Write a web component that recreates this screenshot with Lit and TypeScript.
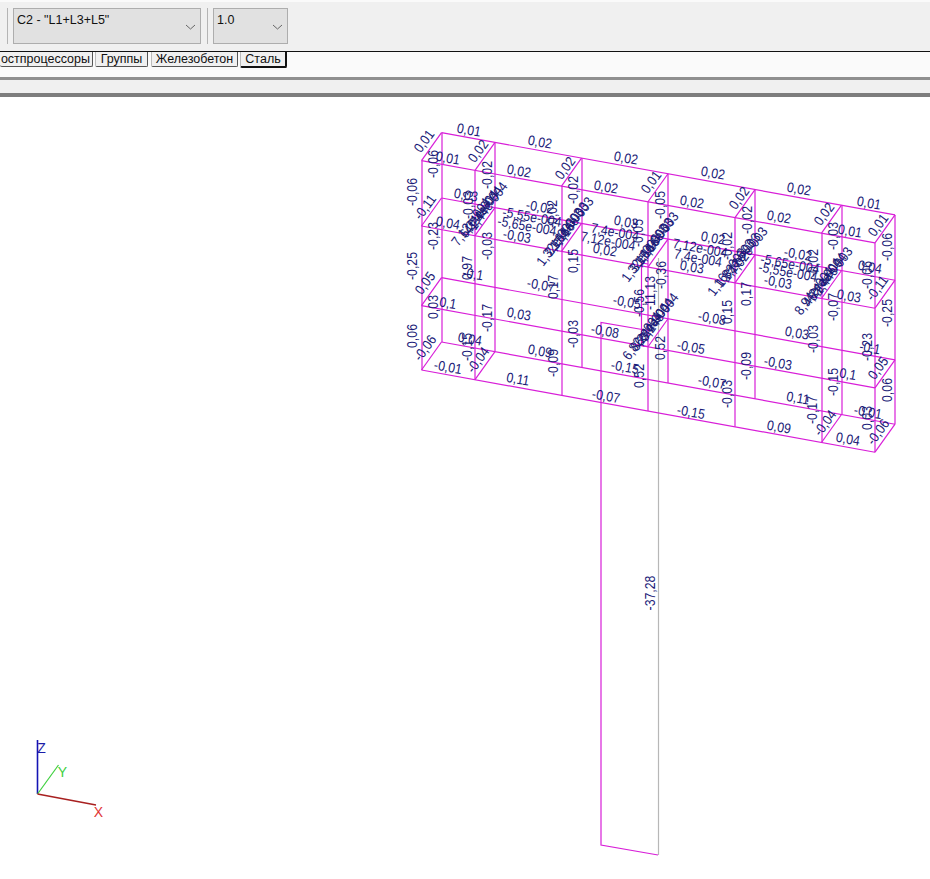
import { LitElement, html, svg, css } from 'lit';
import { customElement } from 'lit/decorators.js';

// x of each frame column on the front face, back face is offset by +20,-28
const COLS = [421.5, 475, 561.5, 648, 735, 821.5, 875];
const LEVELS = [160.7, 226, 305.7, 370];
const SLOPE = 0.1813;
const frontY = (x: number, level: number) => LEVELS[level] + (x - 421.5) * SLOPE;

type Label = [string, number, number];

const ALONG: Label[] = [
  ['0,01', 469, 130], ['0,02', 540, 142], ['0,02', 626, 158], ['0,02', 713, 173], ['0,02', 799, 189], ['0,01', 869, 203],
  ['0,01', 448, 158], ['0,02', 519, 171], ['0,02', 606, 187], ['0,02', 692, 202], ['0,02', 779, 217], ['0,01', 850, 231],
  ['0,03', 466, 195], ['-0,02', 540, 207], ['0,03', 626, 222], ['0,02', 713, 238], ['-0,02', 798, 254], ['0,04', 870, 267],
  ['0,04', 448, 223], ['-0,03', 517, 236], ['0,02', 605, 250], ['0,03', 692, 267], ['-0,03', 778, 282], ['0,03', 849, 296],
  ['-0,1', 473, 274], ['-0,07', 541, 285], ['-0,05', 627, 302], ['-0,08', 712, 318], ['0,03', 797, 333], ['-0,1', 870, 348],
  ['0,1', 448, 303], ['0,03', 519, 314], ['-0,08', 605, 331], ['-0,05', 691, 347], ['-0,03', 778, 363], ['0,1', 848, 374],
  ['0,04', 470, 339], ['0,09', 540, 351], ['-0,15', 625, 367], ['-0,07', 712, 382], ['0,11', 798, 398], ['-0,01', 868, 412],
  ['-0,01', 448, 367], ['0,11', 518, 379], ['-0,07', 606, 396], ['-0,15', 691, 412], ['0,09', 779, 427], ['0,04', 848, 439],
  ['-5,55e-004', 532, 217], ['-5,65e-004', 527, 226], ['7,4e-004', 615, 232], ['7,12e-004', 608, 241],
  ['7,12e-004', 700, 248], ['7,4e-004', 698, 258], ['-5,65e-004', 790, 264], ['-5,55e-004', 788, 272],
];

const DIAG: Label[] = [
  ['0,01', 424, 141], ['0,02', 478, 151], ['0,02', 565, 168], ['0,01', 651, 182], ['0,02', 739, 198], ['0,02', 824, 214], ['0,01', 878, 225],
  ['-0,11', 425, 207], ['-0,11', 877, 288], ['0,05', 425, 283], ['0,05', 878, 368],
  ['-0,06', 425, 348], ['-0,04', 478, 360], ['-0,04', 825, 423], ['-0,06', 878, 432],
  // these sit on top of each other in the original too
  ['7,12e-004', 471, 222], ['1,44e-004', 488, 206], ['6,24e-004', 479, 214], ['4,24e-004', 483, 210],
  ['1,32e-003', 556, 242], ['7,16e-003', 574, 221], ['2,16e-003', 564, 232], ['1,16e-003', 569, 226],
  ['1,32e-003', 641, 258], ['7,16e-003', 659, 236], ['3,16e-003', 649, 248], ['1,16e-003', 654, 242],
  ['1,16e-003', 727, 272], ['7,02e-003', 748, 251], ['1,32e-003', 735, 263], ['1,12e-003', 741, 257],
  ['8,94e-004', 814, 291], ['1,44e-003', 833, 271], ['4,24e-004', 822, 282], ['6,24e-004', 827, 277],
  ['6,82e-004', 642, 336], ['3,24e-004', 659, 317], ['8,24e-004', 650, 327], ['6,24e-004', 654, 322],
];

const UPRIGHT: Label[] = [
  ['-0,06', 433, 164], ['-0,02', 487, 175], ['-0,02', 573, 190], ['-0,05', 660, 205], ['-0,02', 747, 220], ['-0,03', 833, 236], ['-0,06', 887, 247],
  ['-0,06', 412, 192], ['-0,03', 468, 205], ['-0,02', 552, 214], ['-0,05', 638, 233], ['-0,02', 727, 246], ['-0,02', 813, 263], ['-0,06', 867, 275],
  ['-0,25', 412, 266], ['-0,23', 433, 236], ['-0,03', 487, 246], ['0,15', 573, 261], ['-0,36', 661, 275], ['0,17', 746, 294], ['-0,07', 833, 307], ['-0,25', 887, 313],
  ['0,97', 467, 268], ['0,17', 553, 287], ['-0,56', 639, 303], ['-11,13', 650, 293], ['0,15', 727, 312], ['-0,03', 813, 339], ['-0,23', 867, 347],
  ['0,06', 412, 336], ['0,03', 433, 307], ['-0,17', 487, 318], ['-0,03', 573, 334], ['0,52', 660, 348], ['-0,09', 746, 366], ['-0,15', 833, 382], ['0,06', 887, 390],
  ['-0,15', 467, 347], ['-0,09', 553, 363], ['0,52', 639, 376], ['-0,03', 727, 394], ['-0,17', 812, 410], ['0,03', 867, 418],
  ['-37,28', 650, 593],
];

@customElement('app-root')
export class AppRoot extends LitElement {
  static styles = css`
    :host {
      display: block;
      width: 930px;
      height: 879px;
      overflow: hidden;
      background: #fff;
      font-family: 'Liberation Sans', Arial, sans-serif;
    }
    .toolbar {
      height: 52px;
      box-sizing: border-box;
      background: #f0f0f0;
      border-top: 2px solid #fafafa;
      border-bottom: 1px solid #111;
      display: flex;
      gap: 5px;
      padding: 6px 0 0 7px;
      align-items: flex-start;
    }
    .sep {
      width: 1px;
      height: 36px;
      background: #b4b4b4;
    }
    .sep.mid { margin-left: 1px; }
    .combo {
      height: 36px;
      box-sizing: border-box;
      background: #e1e1e1;
      border: 1px solid #adadad;
      padding: 4px 3px;
      font-size: 12.5px;
      line-height: 15px;
      color: #111;
      position: relative;
    }
    .combo.wide { width: 188px; }
    .combo.small { width: 75px; }
    .combo svg {
      position: absolute;
      right: 4px;
      bottom: 13px;
    }
    .tabs {
      height: 25px;
      box-sizing: border-box;
      background: #fafafa;
      display: flex;
      gap: 2px;
      font-size: 12.5px;
      line-height: 15px;
      color: #111;
    }
    .tab {
      height: 15px;
      box-sizing: border-box;
      background: #f0f0f0;
      border-left: 1px solid #bbb;
      border-right: 1px solid #555;
      border-bottom: 1px solid #555;
      border-radius: 0 0 2px 2px;
      text-align: center;
      white-space: nowrap;
      flex: none;
    }
    .tab.first {
      width: 93px;
      border-left: none;
      text-align: right;
      padding-right: 2px;
    }
    .tab.groups { width: 53px; }
    .tab.concrete { width: 87px; margin-left: 1px; }
    .tab.steel {
      width: 47px;
      height: 16px;
      border-right: 2px solid #111;
      border-bottom: 2px solid #111;
    }
    .band {
      height: 20px;
      box-sizing: border-box;
      background: #f0f0f0;
      border-top: 3px solid #8f8f8f;
      border-bottom: 4px solid #7d7d7d;
    }
    svg.view { display: block; }
    svg.view text {
      font-size: 14px;
      fill: #1a1a78;
      text-anchor: middle;
      dominant-baseline: central;
    }
    svg.view text.axis { font-size: 14px; }
    svg.view text.axis.z { fill: #1c1ca8; }
    svg.view text.axis.y { fill: #3ed03e; }
    svg.view text.axis.x { fill: #e03535; }
    svg.view line, svg.view polyline { fill: none; stroke: #d81ed8; stroke-width: 1.2; }
    svg.view line.pillar { stroke: #b7b7b7; }
    svg.view line.axis-z { stroke: #1414b4; stroke-width: 1.6; }
    svg.view line.axis-y { stroke: #3ed03e; }
    svg.view line.axis-x { stroke: #a82020; stroke-width: 1.6; }
    .chev { fill: none; stroke: #666; stroke-width: 1; }
  `;

  private frame() {
    const lines: unknown[] = [];
    const seg = (x1: number, y1: number, x2: number, y2: number) =>
      lines.push(svg`<line x1=${x1} y1=${y1} x2=${x2} y2=${y2}></line>`);

    for (const x of COLS) {
      const rx = Math.round(x);
      seg(rx, frontY(x, 0), rx, frontY(x, 3));
      seg(rx + 20, frontY(x, 0) - 28, rx + 20, frontY(x, 3) - 28);
    }
    LEVELS.forEach((_, lv) => {
      const l = COLS[0];
      const r = COLS[COLS.length - 1];
      seg(l, frontY(l, lv), r, frontY(r, lv));
      seg(l + 20, frontY(l, lv) - 28, r + 20, frontY(r, lv) - 28);
    });
    // cross pieces between faces, not every bay has them on the lower levels
    const cross = [[0, 1, 2, 3, 4, 5, 6], [0, 1, 2, 3, 4, 5, 6], [0, 3, 6], [0, 1, 5, 6]];
    cross.forEach((cols, lv) => {
      for (const c of cols) {
        const x = COLS[c];
        seg(x, frontY(x, lv), x + 20, frontY(x, lv) - 28);
      }
    });
    return lines;
  }

  // the plot squeezes its captions a bit, tall but narrow
  private labels(items: Label[], angle: number) {
    return items.map(
      ([t, x, y]) => svg`<text transform="translate(${x} ${y}) rotate(${angle}) scale(0.88 1)">${t}</text>`
    );
  }

  private chevron() {
    return html`<svg width="11" height="6" viewBox="0 0 11 6">
      <polyline class="chev" points="1,1 5.5,5 10,1"></polyline>
    </svg>`;
  }

  render() {
    return html`
      <div class="toolbar">
        <div class="sep"></div>
        <div class="combo wide">C2 - "L1+L3+L5"${this.chevron()}</div>
        <div class="sep mid"></div>
        <div class="combo small">1.0${this.chevron()}</div>
      </div>
      <div class="tabs">
        <div class="tab first">остпроцессоры</div>
        <div class="tab groups">Группы</div>
        <div class="tab concrete">Железобетон</div>
        <div class="tab steel">Сталь</div>
      </div>
      <div class="band"></div>
      <svg class="view" width="930" height="782" viewBox="0 97 930 782">
        <line class="pillar" x1="658.5" y1="258" x2="658.5" y2="855"></line>
        ${this.frame()}
        <polyline points="648,330.5 601,322.5 601,845 658,855"></polyline>
        <polyline points="648,264 641.5,263 641.5,345.5 648,346.5"></polyline>
        ${this.labels(ALONG, 10.3)}
        ${this.labels(DIAG, -53.5)}
        ${this.labels(UPRIGHT, -90)}
        <line class="axis-z" x1="37.5" y1="794" x2="37.5" y2="740"></line>
        <line class="axis-y" x1="37.5" y1="794" x2="58.5" y2="765"></line>
        <line class="axis-x" x1="37.5" y1="794" x2="96" y2="805"></line>
        <text class="axis z" x="41.5" y="748">Z</text>
        <text class="axis y" x="62.5" y="772">Y</text>
        <text class="axis x" x="98.5" y="812">X</text>
      </svg>
    `;
  }
}
